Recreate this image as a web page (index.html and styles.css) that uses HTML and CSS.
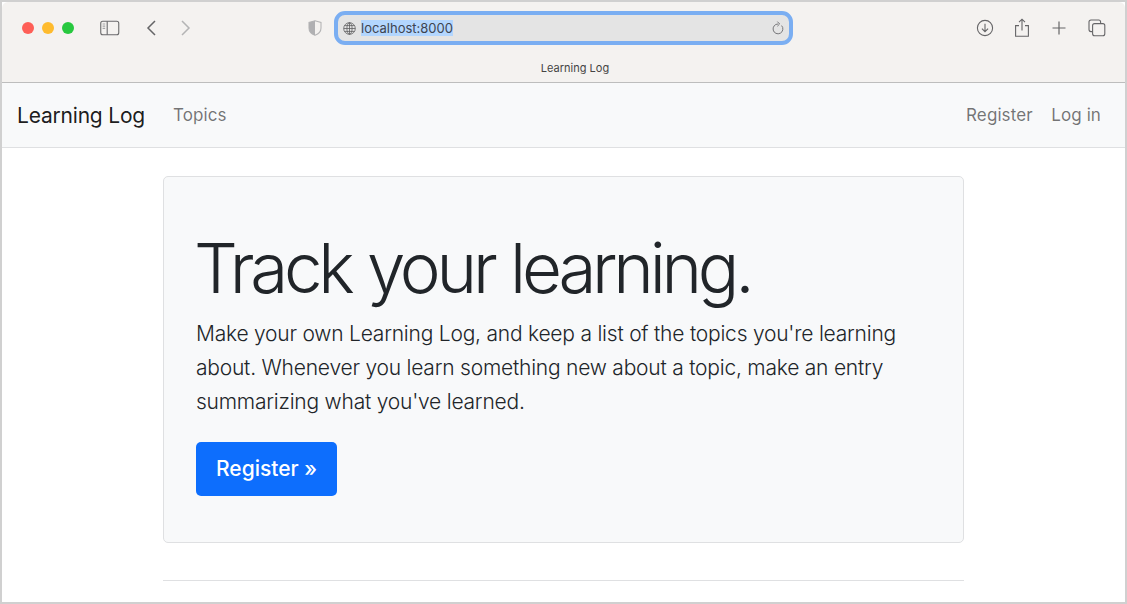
FILE: index.html
```html
<!DOCTYPE html>
<html lang="en">
<head>
    <meta charset="UTF-8">
    <meta name="viewport" content="width=device-width, initial-scale=1.0">
    <title>Learning Log</title>
    <link rel="stylesheet" href="styles.css">
</head>
<body>

<div class="window">
    <!-- Browser toolbar -->
    <div class="chrome">
        <div class="toolbar">
            <div class="lights">
                <span class="light red"></span>
                <span class="light yellow"></span>
                <span class="light green"></span>
            </div>
            <svg class="icon sidebar-icon" width="20" height="16" viewBox="0 0 20 16" fill="none">
                <rect x="0.75" y="1.25" width="18" height="13.5" rx="2" stroke="#6a6a6c" stroke-width="1.1"/>
                <path d="M7.2 1.25V14.75" stroke="#6a6a6c" stroke-width="1.1"/>
                <path d="M2.6 4H5.2M2.6 6.2H5.2M2.6 8.4H5.2" stroke="#a5a5a7" stroke-width="1.2"/>
            </svg>
            <svg class="icon back-icon" width="11" height="16" viewBox="0 0 11 16" fill="none">
                <path d="M9 1L2 8L9 15" stroke="#656567" stroke-width="1.5"/>
            </svg>
            <svg class="icon forward-icon" width="11" height="16" viewBox="0 0 11 16" fill="none">
                <path d="M2 1L9 8L2 15" stroke="#b4b4b5" stroke-width="1.5"/>
            </svg>
            <svg class="icon shield-icon" width="14" height="16" viewBox="0 0 14 16" fill="none">
                <path d="M7 0.8L13 2.4V8C13 11.5 10.5 14 7 15.3C3.5 14 1 11.5 1 8V2.4Z" stroke="#b5b5b6" stroke-width="1.1"/>
                <path d="M7 0.8L1 2.4V8C1 11.5 3.5 14 7 15.3Z" fill="#b0b0b2"/>
            </svg>
            <div class="address">
                <svg class="globe" width="13" height="13" viewBox="0 0 13 13" fill="none" stroke="#5f5f61" stroke-width="0.8">
                    <circle cx="6.5" cy="6.5" r="5.8"/>
                    <ellipse cx="6.5" cy="6.5" rx="2.6" ry="5.8"/>
                    <path d="M6.5 0.7V12.3M0.7 6.5H12.3M1.5 3.6H11.5M1.5 9.4H11.5"/>
                </svg>
                <span class="url">localhost:8000</span>
                <svg class="reload" width="12" height="14" viewBox="0 0 12 14" fill="none" stroke="#77777a" stroke-width="1">
                    <path d="M6 3A4.9 4.9 0 1 0 9.6 4.6"/>
                    <path d="M5.4 0.6L7.6 3L5.4 5.2"/>
                </svg>
            </div>
            <div class="actions">
                <svg class="download" width="18" height="18" viewBox="0 0 18 18" fill="none" stroke="#656567" stroke-width="1.1">
                    <circle cx="9" cy="9" r="7.6"/>
                    <path d="M9 4.8V12.6M5.9 9.6L9 12.7L12.1 9.6"/>
                </svg>
                <svg width="16" height="20" viewBox="0 0 16 20" fill="none" stroke="#656567" stroke-width="1.1">
                    <path d="M5 7.6H1.6V18.2H14.4V7.6H11"/>
                    <path d="M8 12.6V1.4M5 4.2L8 1.2L11 4.2"/>
                </svg>
                <svg width="14" height="14" viewBox="0 0 14 14" fill="none" stroke="#656567" stroke-width="1.2">
                    <path d="M7 0.5V13.5M0.5 7H13.5"/>
                </svg>
                <svg width="18" height="18" viewBox="0 0 18 18" fill="none" stroke="#656567" stroke-width="1.1">
                    <path d="M4.2 12.6H3A2 2 0 0 1 1 10.6V3A2 2 0 0 1 3 1H10.6A2 2 0 0 1 12.6 3V4.2"/>
                    <rect x="4.6" y="4.6" width="12.2" height="12.2" rx="2"/>
                </svg>
            </div>
        </div>
        <div class="tab-title">Learning Log</div>
    </div>

    <nav class="navbar">
        <a href="#" class="brand">Learning Log</a>
        <a href="#" class="nav-link">Topics</a>
        <div class="nav-right">
            <a href="#" class="nav-link">Register</a>
            <a href="#" class="nav-link">Log in</a>
        </div>
    </nav>

    <main class="container">
        <div class="jumbotron">
            <h1>Track your learning.</h1>
            <p class="lead">Make your own Learning Log, and keep a list of the topics you're learning about. Whenever you learn something new about a topic, make an entry summarizing what you've learned.</p>
            <a href="#" class="button">Register &raquo;</a>
        </div>
        <hr class="divider">
    </main>
</div>

</body>
</html>
```

FILE: styles.css
```css
html, body {
    margin: 0;
    padding: 0;
    height: 100%;
    overflow: hidden;
}
body {
    font-family: 'Inter', 'Liberation Sans', sans-serif;
    background-color: white;
    color: #212529;
}
a {
    text-decoration: none;
}
.window {
    box-sizing: border-box;
    height: 604px;
    border: 2px solid #d0d0d0;
    background-color: white;
    overflow: hidden;
}
.chrome {
    height: 81px;
    box-sizing: border-box;
    background-color: #f4f2f0;
    border-bottom: 1px solid #bdbdbd;
    border-radius: 6px 6px 0 0;
}
.toolbar {
    display: flex;
    align-items: center;
    height: 52px;
    padding-left: 20px;
}
.lights {
    display: flex;
    gap: 8px;
}
.light {
    width: 12px;
    height: 12px;
    border-radius: 50%;
}
.red {
    background-color: #fe5f57;
}
.yellow {
    background-color: #febb2e;
}
.green {
    background-color: #27c83f;
}
.icon {
    display: block;
    flex: none;
}
.sidebar-icon {
    margin-left: 26px;
}
.back-icon {
    margin-left: 26px;
}
.forward-icon {
    margin-left: 23px;
}
.shield-icon {
    margin-left: 117px;
}
.address {
    display: flex;
    align-items: center;
    box-sizing: border-box;
    width: 459px;
    height: 34px;
    margin-left: 12px;
    padding: 0 5px;
    background-color: #e4e4e4;
    border: 4px solid #7aaef2;
    border-radius: 11px;
}
.url {
    margin-left: 5px;
    font-size: 13px;
    line-height: 16px;
    color: #3d4450;
    background-color: #b3d6fe;
}
.reload {
    margin-left: auto;
}
.actions {
    display: flex;
    align-items: center;
    gap: 22px;
    margin-left: auto;
    padding-right: 19px;
}
.download {
    margin-right: -2px;
}
.tab-title {
    padding-left: 23px;
    text-align: center;
    font-size: 11px;
    line-height: 28px;
    color: #444;
}
.navbar {
    display: flex;
    align-items: center;
    box-sizing: border-box;
    height: 65px;
    padding: 0 16px 0 15px;
    background-color: #f8f9fa;
    border-bottom: 1px solid #dfe0e2;
}
.brand {
    font-size: 21px;
    font-weight: 420;
    letter-spacing: -0.2px;
    color: rgba(0, 0, 0, 0.9);
    margin-right: 20px;
}
.nav-link {
    padding: 8px;
    font-size: 17px;
    letter-spacing: 0.1px;
    color: rgba(0, 0, 0, 0.55);
}
.nav-right {
    display: flex;
    gap: 2.5px;
    margin-left: auto;
}
.container {
    width: 801px;
    margin: 28px auto 0;
}
.jumbotron {
    box-sizing: border-box;
    height: 367px;
    padding: 48px 32px;
    background-color: #f8f9fa;
    border: 1px solid #dfe0e2;
    border-radius: 5px;
}
.jumbotron h1 {
    margin: 0 0 6px -2px;
    font-size: 69px;
    font-weight: 300;
    line-height: 86px;
    letter-spacing: -4.25px;
    word-spacing: 1.5px;
}
.lead {
    margin: 0 0 23px;
    font-size: 21px;
    font-weight: 350;
    line-height: 34px;
    letter-spacing: -0.22px;
}
.button {
    display: inline-block;
    padding: 8px 20px;
    font-size: 21px;
    font-weight: 500;
    line-height: 38px;
    color: white;
    background-color: #0d6efd;
    border-radius: 5px;
}
.divider {
    margin: 37px 0 0;
    border: 0;
    border-top: 1px solid #dfe0e2;
}
```
